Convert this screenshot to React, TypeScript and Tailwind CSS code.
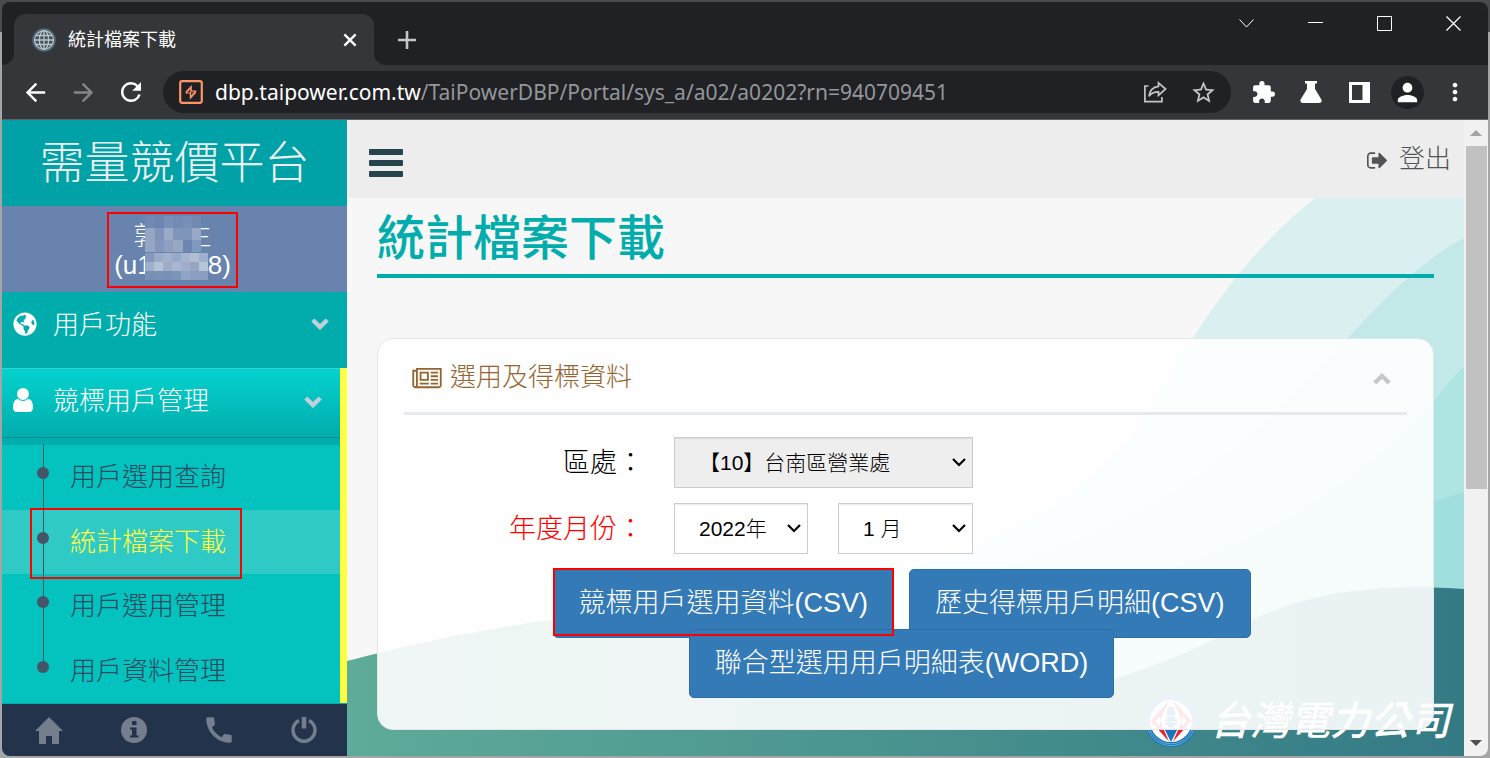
import { useState } from 'react'
import type { ReactNode } from 'react'
import { FaGlobeAmericas } from 'react-icons/fa'
import {
  MdArrowBack,
  MdArrowForward,
  MdCall,
  MdExtension,
  MdMoreVert,
  MdPerson,
  MdRefresh,
  MdStarBorder,
} from 'react-icons/md'

const SUB_MENU = ['用戶選用查詢', '統計檔案下載', '用戶選用管理', '用戶資料管理']

function Chevron({ up = false, className = '' }: { up?: boolean; className?: string }) {
  return (
    <svg
      viewBox="0 0 18 12"
      fill="none"
      stroke="currentColor"
      strokeWidth="4.4"
      className={'h-3 w-[18px] shrink-0 ' + className}
      aria-hidden
    >
      <path d={up ? 'M1.8 10 9 3l7.2 7' : 'M1.8 2 9 9l7.2-7'} />
    </svg>
  )
}

function TabGlobe() {
  return (
    <svg viewBox="0 0 24 24" fill="none" className="h-6 w-6 shrink-0" aria-hidden>
      <circle cx="12" cy="12" r="11" fill="#45525a" stroke="#4f6c7a" strokeWidth="1.6" />
      <g stroke="#b9c6ce" strokeWidth="1.3">
        <circle cx="12" cy="12" r="9.4" />
        <ellipse cx="12" cy="12" rx="4.6" ry="9.4" />
        <path d="M12 2.4v19.2M2.4 12h19.2M4 7.5h16M4 16.5h16" />
      </g>
    </svg>
  )
}

function WindowButton({ label, children }: { label: string; children: ReactNode }) {
  return (
    <button type="button" aria-label={label} className="flex h-[43px] w-[69px] items-center justify-center">
      <svg viewBox="0 0 15 15" fill="none" stroke="#fff" className="h-[15px] w-[15px]" aria-hidden>
        {children}
      </svg>
    </button>
  )
}

function ToolbarButton({ label, children }: { label: string; children: ReactNode }) {
  return (
    <button type="button" aria-label={label} className="flex h-10 w-12 shrink-0 items-center justify-center text-white">
      {children}
    </button>
  )
}

function TabStrip() {
  return (
    <div className="flex h-[63px] items-start justify-between rounded-t-lg bg-[#202124]">
      <div className="flex self-end">
        <div className="h-3 w-3 self-end bg-[#35363a]">
          <div className="h-3 w-3 rounded-br-xl bg-[#202124]" />
        </div>
        <div className="flex h-[51px] w-[360px] items-center rounded-t-xl bg-[#35363a] pl-[18px] pr-4">
          <TabGlobe />
          <span className="ml-3 flex-1 text-[18px] leading-6 text-white">統計檔案下載</span>
          <button type="button" aria-label="關閉分頁" className="flex h-4 w-4 items-center justify-center">
            <svg viewBox="0 0 16 16" stroke="#fff" strokeWidth="2.4" className="h-4 w-4" aria-hidden>
              <path d="m2.4 2.4 11.2 11.2M13.6 2.4 2.4 13.6" />
            </svg>
          </button>
        </div>
        <div className="h-3 w-3 self-end bg-[#35363a]">
          <div className="h-3 w-3 rounded-bl-xl bg-[#202124]" />
        </div>
        <button type="button" aria-label="新分頁" className="flex h-[51px] w-[42px] items-center justify-center">
          <svg viewBox="0 0 18 18" stroke="#c4c5c7" strokeWidth="2.6" className="h-[18px] w-[18px]" aria-hidden>
            <path d="M9 0v18M0 9h18" />
          </svg>
        </button>
      </div>
      <div className="flex">
        <WindowButton label="搜尋分頁">
          <path d="m.5 3.5 7 7.5 7-7.500" />
        </WindowButton>
        <WindowButton label="最小化">
          <path d="M0 6.500h15" />
        </WindowButton>
        <WindowButton label="最大化">
          <path d="M.5.5h14v14H.5z" />
        </WindowButton>
        <WindowButton label="關閉">
          <path d="m.5.5 14 14M14.500.5l-14 14" strokeWidth="1.3" />
        </WindowButton>
      </div>
    </div>
  )
}

function Toolbar() {
  return (
    <div className="flex h-[55px] items-center border-b border-[#5f6063] bg-[#35363a] px-[9px]">
      <ToolbarButton label="上一頁">
        <MdArrowBack className="h-[29px] w-[29px]" />
      </ToolbarButton>
      <ToolbarButton label="下一頁">
        <MdArrowForward className="h-[29px] w-[29px] text-[#86878a]" />
      </ToolbarButton>
      <ToolbarButton label="重新載入">
        <MdRefresh className="h-[30px] w-[30px]" />
      </ToolbarButton>

      <div className="mx-2 flex h-[42px] min-w-0 flex-1 items-center rounded-full bg-[#202124] pl-4 pr-1">
        <svg viewBox="0 0 24 24" fill="none" className="h-6 w-6 shrink-0" aria-hidden>
          <rect x="1.200" y="1.200" width="21.600" height="21.600" rx="2" stroke="#ff9466" strokeWidth="2.200" />
          <path d="M12.800 5v5.600h4.400v2.200L10.800 19.800v-6.400H6.600v-2z" fill="#ff9466" />
          <path d="M10.800 9.800v2.100H8.600M12.800 15v-2.700h2.400" stroke="#202124" strokeWidth="1.100" />
        </svg>
        <p className="ml-3 flex-1 truncate font-['Noto_Sans','Noto_Sans_CJK_TC',sans-serif] text-[21px] leading-8 text-[#94979b]">
          <span className="text-white">dbp.taipower.com.tw</span>/TaiPowerDBP/Portal/sys_a/a02/a0202?rn=940709451
        </p>
        <button type="button" aria-label="分享" className="flex h-10 w-12 items-center justify-center">
          <svg viewBox="0 0 24 22" fill="none" stroke="#c4c5c7" strokeWidth="1.700" className="h-[22px] w-6" aria-hidden>
            <path d="M5.500 5H1.900v15.600h17V16" />
            <path d="M15.500 1.800 22.600 8l-7.100 6.400v-3.600C11 10.800 8 12.200 6 15.400 6.600 9.800 10 6 15.500 5.300z" />
          </svg>
        </button>
        <button type="button" aria-label="加入書籤" className="flex h-10 w-12 items-center justify-center text-[#c4c5c7]">
          <MdStarBorder className="h-[27px] w-[27px]" />
        </button>
      </div>

      <ToolbarButton label="擴充功能">
        <MdExtension className="h-[25px] w-[25px]" />
      </ToolbarButton>
      <ToolbarButton label="實驗功能">
        <svg viewBox="0 0 22 22" fill="currentColor" className="h-[22px] w-[22px]" aria-hidden>
          <path d="M5 0h12v2.500h-2V8l6.400 10.500q1 3.500-2.400 3.500H3q-3.400 0-2.400-3.500L7 8V2.500H5z" />
        </svg>
      </ToolbarButton>
      <ToolbarButton label="側邊面板">
        <svg viewBox="0 0 21 21" className="h-[21px] w-[21px]" aria-hidden>
          <path fill="currentColor" fillRule="evenodd" d="M0 0h21v21H0zM3 3v15h10.500V3z" />
        </svg>
      </ToolbarButton>
      <ToolbarButton label="個人資料">
        <span className="flex h-[33px] w-[33px] items-center justify-center rounded-full bg-[#202124]">
          <MdPerson className="h-[29px] w-[29px]" />
        </span>
      </ToolbarButton>
      <ToolbarButton label="更多">
        <MdMoreVert className="h-7 w-7" />
      </ToolbarButton>
    </div>
  )
}

// Pixelated patches that hide most of the account name
const MOSAIC_TOP = ['bg-[#7189b2]', 'bg-[#6d86b1]', 'bg-[#7890b5]', 'bg-[#748cb3]', 'bg-[#7790b6]', 'bg-[#728ab2]',
  'bg-[#95a5c4]', 'bg-[#8094ba]', 'bg-[#9aaac8]', 'bg-[#7f96ba]', 'bg-[#8195bb]', 'bg-[#99a8c6]',
  'bg-[#94a6c4]', 'bg-[#8396bd]', 'bg-[#8e9fc2]', 'bg-[#97a8c5]', 'bg-[#6c85b1]', 'bg-[#8299bf]']
const MOSAIC_BOTTOM = ['bg-[#8497bf]', 'bg-[#9aaac8]', 'bg-[#a2b1cc]', 'bg-[#98a9c7]', 'bg-[#a5b5cf]', 'bg-[#b1bed4]', 'bg-[#9fb0cc]',
  'bg-[#9cb2cc]', 'bg-[#b3c2d5]', 'bg-[#9eabc9]', 'bg-[#a9b5d1]', 'bg-[#a0aecb]', 'bg-[#94a6c4]', 'bg-[#b7c3d7]',
  'bg-[#7690b7]', 'bg-[#7b92b8]', 'bg-[#7790b6]', 'bg-[#7d94ba]', 'bg-[#92a4c5]', 'bg-[#8a9fc1]', 'bg-[#8a9dc0]']

function UserBox() {
  return (
    <div className="flex h-[86px] items-center justify-center bg-[#6883ae] pr-1 pt-0.5 text-[26px] font-light leading-[29px] text-white">
      <div className="border-2 border-[#ff0000] px-[5px] pb-1.5 pt-2 text-center">
        <p className="flex justify-center">
          <span>郭</span>
          <span className="relative w-[26px]">
            <span className="absolute -left-[14px] -top-1.5 grid w-14 grid-cols-6">
              {MOSAIC_TOP.map((color, i) => (
                <span key={i} className={'h-3 ' + color} />
              ))}
            </span>
          </span>
          <span>生</span>
        </p>
        <p className="flex justify-center">
          <span>(u1</span>
          <span className="relative w-14">
            <span className="absolute -left-[7px] top-0.5 grid w-[63px] grid-cols-7">
              {MOSAIC_BOTTOM.map((color, i) => (
                <span key={i} className={'h-[9px] ' + color} />
              ))}
            </span>
          </span>
          <span>8)</span>
        </p>
      </div>
    </div>
  )
}

function Sidebar() {
  const [active, setActive] = useState(1)

  return (
    <aside className="flex w-[345px] shrink-0 flex-col bg-[#00adac]">
      <h1 className="h-[86px] bg-[#00a2a8] text-center text-[45px] font-light leading-[88px] text-[#ecf0f1]">需量競價平台</h1>
      <UserBox />

      <nav className="flex flex-1 flex-col font-light">
        <a href="#user" className="flex h-[76px] items-start pl-[11px] pr-[18px] pt-3 text-[26px] leading-[42px] text-white">
          <FaGlobeAmericas className="mt-2 h-6 w-6" />
          <span className="ml-4 flex-1">用戶功能</span>
          <Chevron className="mt-[14px] text-[#c4cfda]" />
        </a>

        <div className="flex flex-1 flex-col border-r-[7px] border-[#ffff3f]">
          <a
            href="#bidding"
            className="mb-[7px] flex h-[70px] items-start border-b border-t border-b-[#008f8e] border-t-[#2fd6d2] bg-linear-to-b from-[#05d2ce] to-[#00adac] pl-[11px] pr-[18px] pt-[11px] text-[26px] leading-[42px] text-white"
          >
            <svg viewBox="0 0 1280 1536" fill="currentColor" className="mt-2 h-6 w-5" aria-hidden>
              <path d="M1280 1271q0 109-62.500 187t-150.500 78h-854q-88 0-150.500-78t-62.500-187q0-85 8.500-160.500t31.500-152 58.500-131 94-89 134.500-34.500q131 128 313 128t313-128q76 0 134.500 34.500t94 89 58.500 131 31.500 152 8.500 160.500zm-256-887q0 159-112.500 271.500t-271.500 112.500-271.500-112.500-112.500-271.500 112.500-271.500 271.500-112.500 271.500 112.500 112.500 271.500z" />
            </svg>
            <span className="ml-5 flex-1">競標用戶管理</span>
            <Chevron className="mt-4 text-[#c4cfda]" />
          </a>

          <ul className="flex flex-1 flex-col bg-[#04c3be]">
            {SUB_MENU.map((label, i) => (
              <li key={label} className={'relative flex flex-1 ' + (i === active ? 'bg-[#2fcac6]' : '')}>
                <span
                  className={
                    'absolute left-[41px] w-px bg-[#425668] ' + (i === SUB_MENU.length - 1 ? 'top-0 h-7' : 'inset-y-0')
                  }
                />
                <span className="absolute left-[35px] top-[22px] h-3 w-3 rounded-full bg-[#425668]" />
                {i === active && <span className="absolute -top-0.5 left-7 z-10 h-[71px] w-[212px] border-2 border-[#ff0000]" />}
                <a
                  href="#sub"
                  onClick={() => setActive(i)}
                  className={
                    'flex flex-1 items-center pl-[68px] text-[26px] leading-[60px] ' +
                    (i === active ? 'text-[#ffff3f]' : 'text-[#2a4a5e]')
                  }
                >
                  {label}
                </a>
              </li>
            ))}
          </ul>
        </div>
      </nav>

      <div className="mt-px grid h-[52px] grid-cols-4 bg-[#23334c] pl-1 text-[#747e8c]">
        <button type="button" aria-label="首頁" className="flex items-center justify-center">
          <svg viewBox="0 0 28 27" fill="currentColor" className="h-[27px] w-7" aria-hidden>
            <path d="M14 0 28 14h-4v13h-7v-8h-6v8H4V14H0z" />
          </svg>
        </button>
        <button type="button" aria-label="資訊" className="flex items-center justify-center">
          <svg viewBox="0 0 26 26" fill="currentColor" fillRule="evenodd" className="h-[26px] w-[26px]" aria-hidden>
            <path d="M13 0a13 13 0 1 1 0 26 13 13 0 0 1 0-26zM11 4v4h4.500V4zM9 10.500v2h2v6H9v2h8.500v-2h-2v-8z" />
          </svg>
        </button>
        <button type="button" aria-label="電話" className="flex items-center justify-center">
          <MdCall className="h-[34px] w-[34px]" />
        </button>
        <button type="button" aria-label="關機" className="flex items-center justify-center">
          <svg viewBox="0 0 26 26" fill="none" stroke="currentColor" className="h-[26px] w-[26px]" aria-hidden>
            <path d="M8 3.400a11 11 0 1 0 10 0" strokeWidth="3.400" />
            <path d="M13 0v11.500" strokeWidth="4.600" />
          </svg>
        </button>
      </div>
    </aside>
  )
}

function Backdrop() {
  return (
    <>
      <svg
        viewBox="0 0 1117 558"
        preserveAspectRatio="none"
        className="absolute inset-0 h-full w-full"
        aria-hidden
      >
        <defs>
          <linearGradient id="wave" x1="0" x2="1" y1="0" y2="0">
            <stop offset="0" stopColor="#5fab99" />
            <stop offset="1" stopColor="#337a85" />
          </linearGradient>
        </defs>
        <path d="M968 0C922 36 880 86 846 140 803 209 780 262 703 309 640 348 590 362 480 390L480 558H1117V0z" fill="#daf0f0" />
        <path d="M1117 40C1075 62 1040 98 1001 140 920 225 840 320 640 375L640 558H1117z" fill="#c2e9e8" />
        <path d="M1117 169C1100 184 1094 195 1087 202 1000 290 930 340 760 390V558H1117z" fill="#aee4e1" />
        <path d="M1117 294 1087 304C1000 330 950 380 860 430V558H1117z" fill="#a0dfdd" />
        <path
          d="M0 463C60 448 120 433 205 422 300 410 400 420 480 450 560 495 660 505 766 481 830 462 870 440 903 423 960 395 1030 385 1117 391V558H0z"
          fill="url(#wave)"
        />
      </svg>
      <div className="absolute bottom-2 right-[14px] flex items-center gap-3">
        <svg viewBox="0 0 54 54" className="h-[54px] w-[54px]" aria-hidden>
          <circle cx="27" cy="27" r="26" fill="#1874b8" />
          <g fill="none" stroke="#8fc3e6" strokeWidth=".7">
            <circle cx="27" cy="27" r="24.600" />
            <circle cx="27" cy="27" r="22.800" />
          </g>
          <circle cx="27" cy="27" r="21" fill="#fff" />
          <path d="M25 6.500 6.500 27 25 47.500l-9-20.500zM29 6.500 47.500 27 29 47.500l9-20.500z" fill="#e8242c" />
          <path d="m11 27 5-5v10zM43 27l-5-5v10z" fill="#fff" />
          <path d="M24 13h6l2 9-2 3h3v6h-3v5h3l-6 12-6-12h3v-5h-3v-6h3l-2-3z" fill="#1874b8" />
          <path d="M22 22h10M20 28h14M21 34h12" stroke="#fff" strokeWidth="1.200" />
        </svg>
        <span className="text-[40px] font-medium italic leading-[54px] text-white">台灣電力公司</span>
      </div>
    </>
  )
}

function Select({
  id,
  label,
  options,
  className,
}: {
  id: string
  label?: string
  options: string[]
  className: string
}) {
  return (
    <div className={'relative ' + className}>
      <select
        id={id}
        aria-label={label}
        className="h-[51px] w-full appearance-none border border-[#ccc] bg-inherit pl-6 pr-8 text-[21px] font-light text-black shadow-[inset_0_1px_1px_rgba(0,0,0,0.08)] outline-none"
      >
        {options.map((option) => (
          <option key={option}>{option}</option>
        ))}
      </select>
      <svg
        viewBox="0 0 14 9"
        fill="none"
        stroke="#000"
        strokeWidth="2.200"
        className="pointer-events-none absolute right-[7px] top-[21px] h-[9px] w-[14px]"
        aria-hidden
      >
        <path d="m1 1 6 6 6-6" />
      </svg>
    </div>
  )
}

function DownloadButton({ children, className = '' }: { children: ReactNode; className?: string }) {
  return (
    <button
      type="button"
      className={
        'h-[69px] rounded-[5px] border border-[#2e6da4] bg-[#337ab7] px-[25px] pb-0.5 text-[27px] font-light leading-9 text-white ' +
        className
      }
    >
      {children}
    </button>
  )
}

function DownloadPanel() {
  return (
    <section className="relative mt-[60px] rounded-2xl border border-[#e3e6ea] bg-white/90 px-[26px] pb-[31px]">
      <header className="flex h-[76px] items-center border-b-[3px] border-[#e6e9ed] pl-2 pr-4 pt-0.5 text-[#96652f]">
        <svg viewBox="0 0 2048 1536" fill="currentColor" className="mt-1 h-[22px] w-[30px]" aria-hidden>
          <path d="M1024 384h-384v384h384v-384zm128 640v128h-640v-128h640zm0-768v640h-640v-640h640zm640 768v128h-512v-128h512zm0-256v128h-512v-128h512zm0-256v128h-512v-128h512zm0-256v128h-512v-128h512zm-1536 960v-960h-128v960q0 26 19 45t45 19 45-19 19-45zm1664 0v-1088h-1536v1088q0 33-11 64h1483q26 0 45-19t19-45zm128-1216v1216q0 80-56 136t-136 56h-1664q-80 0-136-56t-56-136v-1088h256v-128h1792z" />
        </svg>
        <h3 className="ml-2 flex-1 text-[26px] font-light leading-10">選用及得標資料</h3>
        <button type="button" aria-label="收合">
          <Chevron up className="mt-1 text-[#c5c7cb]" />
        </button>
      </header>

      <form className="mt-[22px] flex flex-col gap-[15px]">
        <div className="flex items-center gap-[30px]">
          <label htmlFor="district" className="w-60 text-right text-[27px] font-light leading-10 text-black">
            區處：
          </label>
          <Select id="district" options={['【10】台南區營業處']} className="w-[299px] bg-[#eee]" />
        </div>
        <div className="flex items-center gap-[30px]">
          <label htmlFor="year" className="w-60 text-right text-[27px] font-light leading-10 text-[#ff0000]">
            年度月份：
          </label>
          <Select id="year" options={['2022年']} className="w-[134px] bg-white" />
          <Select id="month" label="月份" options={['1 月']} className="w-[135px] bg-white" />
        </div>
        <div className="flex flex-col items-center pr-2">
          <div className="flex gap-[15px]">
            <div className="relative">
              <DownloadButton>競標用戶選用資料(CSV)</DownloadButton>
              <span className="pointer-events-none absolute -top-px bottom-0.5 left-0 right-0 z-10 border-2 border-[#ff0000]" />
            </div>
            <DownloadButton>歷史得標用戶明細(CSV)</DownloadButton>
          </div>
          <DownloadButton className="relative -mt-[9px]">聯合型選用用戶明細表(WORD)</DownloadButton>
        </div>
      </form>
    </section>
  )
}

function Content() {
  return (
    <div className="flex min-w-0 flex-1 flex-col">
      <header className="flex h-[78px] items-center justify-between bg-[#ededed] pl-[22px] pr-[13px]">
        <button type="button" aria-label="切換選單" className="mt-2 flex w-[34px] flex-col gap-[5px]">
          <span className="h-1.5 rounded-[1px] bg-[#25444c]" />
          <span className="h-1.5 rounded-[1px] bg-[#25444c]" />
          <span className="h-1.5 rounded-[1px] bg-[#25444c]" />
        </button>
        <a href="#logout" className="flex items-center gap-3 text-[26px] font-light leading-10 text-[#515356]">
          <svg viewBox="0 0 1568 1280" fill="currentColor" className="mt-0.5 h-[17px] w-5" aria-hidden>
            <path d="M640 1184q0 4 1 20t.5 26.500-3 23.500-10 19.500-20.500 6.500h-320q-119 0-203.500-84.500t-84.500-203.500v-704q0-119 84.500-203.500t203.500-84.500h320q13 0 22.500 9.500t9.500 22.500q0 4 1 20t.5 26.500-3 23.500-10 19.500-20.500 6.500h-320q-66 0-113 47t-47 113v704q0 66 47 113t113 47h312l11.500 1 11.500 3 8 5.500 7 9 2 13.500zm928-544q0 26-19 45l-544 544q-19 19-45 19t-45-19-19-45v-288h-448q-26 0-45-19t-19-45v-384q0-26 19-45t45-19h448v-288q0-26 19-45t45-19 45 19l544 544q19 19 19 45z" />
          </svg>
          登出
        </a>
      </header>
      <main className="relative flex-1 bg-[#f7f7f7] px-[30px] pb-[26px]">
        <Backdrop />
        <h2 className="relative h-20 border-b-4 border-[#00adac] text-[48px] font-medium leading-[82px] text-[#00adac]">
          統計檔案下載
        </h2>
        <DownloadPanel />
      </main>
    </div>
  )
}

function ScrollBar() {
  return (
    <div className="flex w-6 shrink-0 flex-col items-center bg-[#f1f1f1]" aria-hidden>
      <svg viewBox="0 0 12 6" className="my-[10px] h-[6px] w-3 shrink-0" fill="#a3a3a3">
        <path d="M6 0l6 6H0z" />
      </svg>
      <div className="h-[54%] w-[21px] bg-[#c1c1c1]" />
      <svg viewBox="0 0 12 6" className="mb-[10px] mt-auto h-[6px] w-3 shrink-0" fill="#505050">
        <path d="M0 0h12L6 6z" />
      </svg>
    </div>
  )
}

export default function App() {
  return (
    <div className="flex min-h-screen flex-col bg-linear-to-b from-[#4a4b4d] from-[32px] to-[#a5a5a5] to-[32px] p-0.5 font-['Liberation_Sans','Noto_Sans_CJK_TC',sans-serif]">
      <TabStrip />
      <Toolbar />
      <div className="flex flex-1 overflow-hidden rounded-b-lg">
        <Sidebar />
        <Content />
        <ScrollBar />
      </div>
    </div>
  )
}
